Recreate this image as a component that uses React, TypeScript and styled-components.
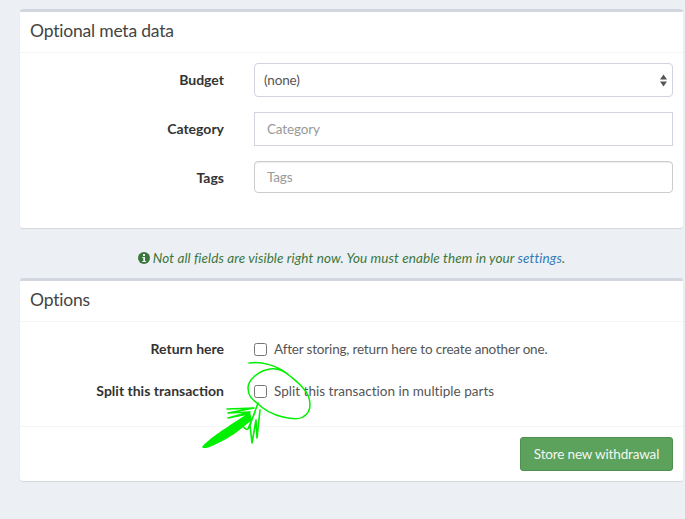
import React from "react";
import styled, { createGlobalStyle } from "styled-components";

const Global = createGlobalStyle`
  html, body { margin: 0; padding: 0; background: #ecf0f5; }
  body { font-family: "Lato", "Noto Sans", sans-serif; font-size: 13.5px; letter-spacing: -0.155px; color: #333; }
`;

const Page = styled.div`
  position: relative;
  width: 685px;
  height: 519px;
  box-sizing: border-box;
  padding: 9px 2px 0 20px;
  overflow: hidden;
`;

const Card = styled.section`
  background: #fff;
  border-top: 3px solid #d2d6de;
  border-radius: 3px;
  box-shadow: 0 1px 1px rgba(0, 0, 0, 0.1);
`;

const CardHeader = styled.header`
  height: 41px;
  box-sizing: border-box;
  padding: 0 10px 4px;
  display: flex;
  align-items: center;
  font-size: 17.5px;
  letter-spacing: -0.2px;
  color: #444;
  border-bottom: 1px solid #f4f4f4;
`;

const CardBody = styled.div<{ $bottom: number }>`
  padding: 10px 0 ${(p) => p.$bottom}px;
  display: flex;
  flex-direction: column;
  gap: 15px;
`;

const Row = styled.div`
  display: grid;
  grid-template-columns: 204px 419px;
  column-gap: 30px;
  align-items: start;
`;

const Label = styled.label`
  padding-top: 7px;
  line-height: 20px;
  font-weight: 700;
  font-size: 14px;
  letter-spacing: 0;
  text-align: right;
  color: #333;
`;

const Select = styled.div`
  height: 34px;
  box-sizing: border-box;
  border: 1px solid #d2d2e0;
  border-radius: 4px;
  padding: 0 4px 0 9px;
  display: flex;
  align-items: center;
  justify-content: space-between;
  color: #555;
`;

const Input = styled.input<{ $h: number; $round?: boolean; $inset?: boolean }>`
  display: block;
  height: ${(p) => p.$h}px;
  width: 100%;
  box-sizing: border-box;
  border: 1px solid ${(p) => (p.$inset ? "#ccc" : "#d2d2e0")};
  border-radius: ${(p) => (p.$round ? "4px" : "0")};
  box-shadow: ${(p) => (p.$inset ? "inset 0 1px 1px rgba(0,0,0,.075)" : "none")};
  padding: 0 12px;
  font: 13.5px "Lato", "Noto Sans", sans-serif;
  letter-spacing: -0.155px;
  background: #fff;
  &::placeholder { color: #999; opacity: 1; }
`;

const Note = styled.p`
  margin: 0;
  height: 50px;
  box-sizing: border-box;
  padding-top: 22px;
  line-height: 16px;
  text-align: center;
  font-style: italic;
  letter-spacing: 0.095px;
  color: #3c763d;
`;

const NoteIcon = styled.svg`
  vertical-align: -1px;
  margin-right: 3px;
`;

const NoteLink = styled.a`
  color: #337ab7;
`;

const CheckText = styled.label<{ $spacing: number }>`
  padding-top: 7px;
  line-height: 20px;
  display: flex;
  align-items: center;
  gap: 7px;
  color: #555;
  letter-spacing: ${(p) => p.$spacing}px;
`;

const CheckBox = styled.span`
  width: 13px;
  height: 13px;
  box-sizing: border-box;
  border: 1px solid #767676;
  border-radius: 2.5px;
  background: #fff;
`;

const CardFooter = styled.footer`
  border-top: 1px solid #f4f4f4;
  padding: 10px;
  display: flex;
  justify-content: flex-end;
`;

const Button = styled.button`
  height: 34px;
  width: 153px;
  border: 1px solid #4f8f4f;
  border-radius: 3px;
  background: #5ca15c;
  color: #f2f7f2;
  font: 13.5px "Lato", "Noto Sans", sans-serif;
  letter-spacing: -0.155px;
  padding: 0;
`;

const Scribble = styled.svg`
  position: absolute;
  left: 190px;
  top: 350px;
  pointer-events: none;
`;

const InfoIcon = () => (
  <NoteIcon width="12" height="12" viewBox="0 0 12 12" aria-hidden="true">
    <circle cx="6" cy="6" r="6" fill="#3c763d" />
    <rect x="5" y="2" width="2" height="2" fill="#ecf0f5" />
    <path d="M4.3 5h2.7v4h1v1H4.3V9h1V6h-1z" fill="#ecf0f5" />
  </NoteIcon>
);

const Arrows = () => (
  <svg width="9" height="13" viewBox="0 0 9 13" aria-hidden="true">
    <path d="M4.5 0.5 8 5.5H1z M1 7.5h7L4.5 12.5z" fill="#555" />
  </svg>
);

export default function App() {
  return (
    <Page>
      <Global />
      <Card>
        <CardHeader>Optional meta data</CardHeader>
        <CardBody $bottom={35}>
          <Row>
            <Label>Budget</Label>
            <Select>
              (none)
              <Arrows />
            </Select>
          </Row>
          <Row>
            <Label>Category</Label>
            <Input $h={34} placeholder="Category" />
          </Row>
          <Row>
            <Label>Tags</Label>
            <Input $h={32} $round $inset placeholder="Tags" />
          </Row>
        </CardBody>
      </Card>
      <Note>
        <InfoIcon />
        Not all fields are visible right now. You must enable them in your <NoteLink>settings</NoteLink>.
      </Note>
      <Card>
        <CardHeader>Options</CardHeader>
        <CardBody $bottom={25}>
          <Row>
            <Label>Return here</Label>
            <CheckText $spacing={-0.175}>
              <CheckBox />
              After storing, return here to create another one.
            </CheckText>
          </Row>
          <Row>
            <Label>Split this transaction</Label>
            <CheckText $spacing={0.02}>
              <CheckBox />
              Split this transaction in multiple parts
            </CheckText>
          </Row>
        </CardBody>
        <CardFooter>
          <Button>Store new withdrawal</Button>
        </CardFooter>
      </Card>
      <Scribble width="140" height="110" viewBox="0 0 140 110" fill="none">
        <path
          d="M59 13C70 11 88 15 100 26C92 19 86 18 80 19C68 21 58 30 58 38C58 46 62 49 67 53C74 60 84 65 93 67C102 69 110 69 113 67C118 64 120 60 120 55C120 48 118 43 113 38C109 33 105 30 100 26"
          stroke="#00f000"
          strokeWidth="1.5"
          strokeLinecap="round"
        />
        <path
          d="M37 59 64 58 38 63 60 62 38 68 58 64M68 53 60 75 62 93 66 70 67 88 70 60M53 76Q55 80 58 79L65 62"
          stroke="#00f000"
          strokeWidth="1.6"
          strokeLinejoin="round"
          strokeLinecap="round"
        />
        <path d="M12 97C18 90 28 83 48 70L60 62 62 70 52 78C40 88 30 92 22 96C18 98 13 99 12 97Z" fill="#00f000" />
      </Scribble>
    </Page>
  );
}
